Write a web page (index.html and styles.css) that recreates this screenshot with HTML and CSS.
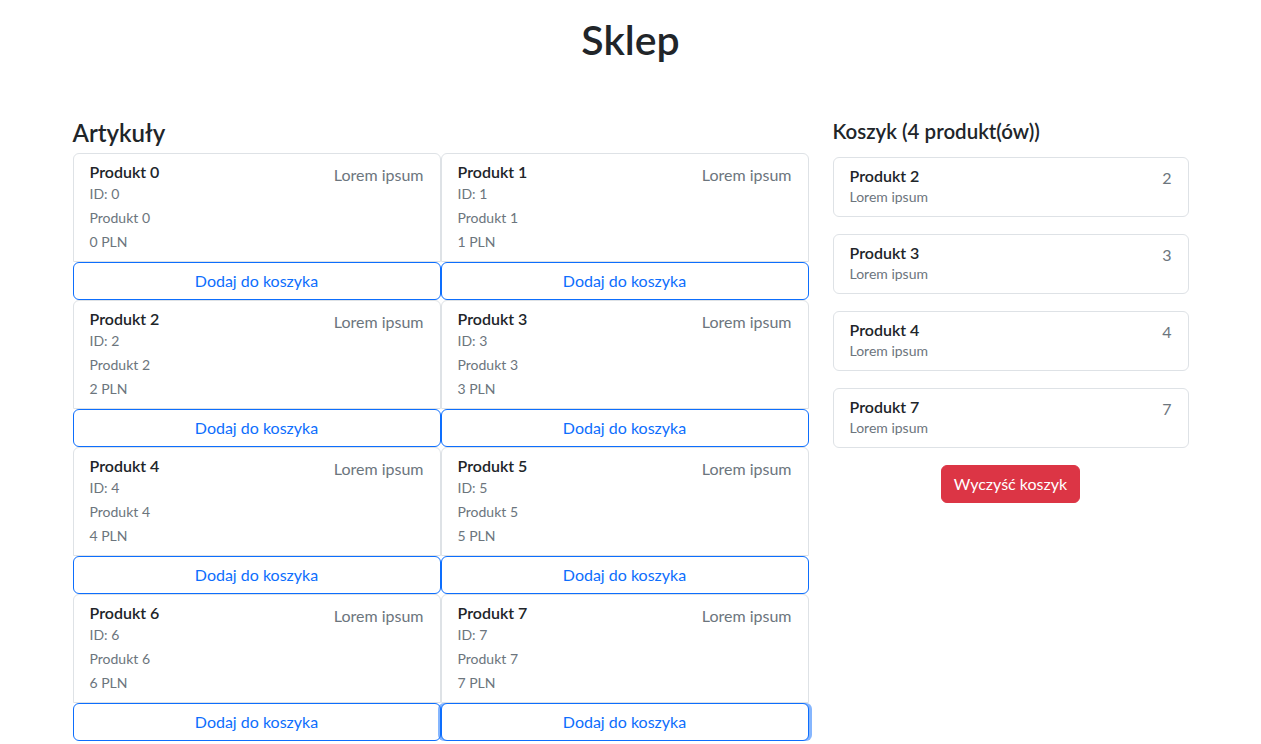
FILE: index.html
```html
<!DOCTYPE html>
<html lang="pl">
<head>
<meta charset="utf-8">
<title>Sklep</title>
<link rel="stylesheet" href="styles.css">
</head>
<body>
<div class="container">
  <h1 class="page-title">Sklep</h1>
  <div class="layout">
    <section class="products">
      <h2 class="section-title">Artykuły</h2>
      <div class="product-grid">
        <div class="product">
          <div class="card">
            <div class="card-head"><span class="card-title">Produkt 0</span><span class="card-aside">Lorem ipsum</span></div>
            <div class="card-line">ID: 0</div>
            <div class="card-line">Produkt 0</div>
            <div class="card-line">0 PLN</div>
          </div>
          <button class="btn-outline">Dodaj do koszyka</button>
        </div>
        <div class="product">
          <div class="card">
            <div class="card-head"><span class="card-title">Produkt 1</span><span class="card-aside">Lorem ipsum</span></div>
            <div class="card-line">ID: 1</div>
            <div class="card-line">Produkt 1</div>
            <div class="card-line">1 PLN</div>
          </div>
          <button class="btn-outline">Dodaj do koszyka</button>
        </div>
        <div class="product">
          <div class="card">
            <div class="card-head"><span class="card-title">Produkt 2</span><span class="card-aside">Lorem ipsum</span></div>
            <div class="card-line">ID: 2</div>
            <div class="card-line">Produkt 2</div>
            <div class="card-line">2 PLN</div>
          </div>
          <button class="btn-outline">Dodaj do koszyka</button>
        </div>
        <div class="product">
          <div class="card">
            <div class="card-head"><span class="card-title">Produkt 3</span><span class="card-aside">Lorem ipsum</span></div>
            <div class="card-line">ID: 3</div>
            <div class="card-line">Produkt 3</div>
            <div class="card-line">3 PLN</div>
          </div>
          <button class="btn-outline">Dodaj do koszyka</button>
        </div>
        <div class="product">
          <div class="card">
            <div class="card-head"><span class="card-title">Produkt 4</span><span class="card-aside">Lorem ipsum</span></div>
            <div class="card-line">ID: 4</div>
            <div class="card-line">Produkt 4</div>
            <div class="card-line">4 PLN</div>
          </div>
          <button class="btn-outline">Dodaj do koszyka</button>
        </div>
        <div class="product">
          <div class="card">
            <div class="card-head"><span class="card-title">Produkt 5</span><span class="card-aside">Lorem ipsum</span></div>
            <div class="card-line">ID: 5</div>
            <div class="card-line">Produkt 5</div>
            <div class="card-line">5 PLN</div>
          </div>
          <button class="btn-outline">Dodaj do koszyka</button>
        </div>
        <div class="product">
          <div class="card">
            <div class="card-head"><span class="card-title">Produkt 6</span><span class="card-aside">Lorem ipsum</span></div>
            <div class="card-line">ID: 6</div>
            <div class="card-line">Produkt 6</div>
            <div class="card-line">6 PLN</div>
          </div>
          <button class="btn-outline">Dodaj do koszyka</button>
        </div>
        <div class="product">
          <div class="card">
            <div class="card-head"><span class="card-title">Produkt 7</span><span class="card-aside">Lorem ipsum</span></div>
            <div class="card-line">ID: 7</div>
            <div class="card-line">Produkt 7</div>
            <div class="card-line">7 PLN</div>
          </div>
          <button class="btn-outline is-focused">Dodaj do koszyka</button>
        </div>
      </div>
    </section>
    <aside class="cart">
      <h3 class="cart-title">Koszyk (4 produkt(ów))</h3>
      <div class="cart-item">
        <div class="cart-info"><div class="cart-name">Produkt 2</div><div class="cart-desc">Lorem ipsum</div></div>
        <div class="cart-qty">2</div>
      </div>
      <div class="cart-item">
        <div class="cart-info"><div class="cart-name">Produkt 3</div><div class="cart-desc">Lorem ipsum</div></div>
        <div class="cart-qty">3</div>
      </div>
      <div class="cart-item">
        <div class="cart-info"><div class="cart-name">Produkt 4</div><div class="cart-desc">Lorem ipsum</div></div>
        <div class="cart-qty">4</div>
      </div>
      <div class="cart-item">
        <div class="cart-info"><div class="cart-name">Produkt 7</div><div class="cart-desc">Lorem ipsum</div></div>
        <div class="cart-qty">7</div>
      </div>
      <div class="cart-actions"><button class="btn-danger">Wyczyść koszyk</button></div>
    </aside>
  </div>
</div>
</body>
</html>
```
FILE: styles.css
```css
* { box-sizing: border-box; }
body {
  margin: 0;
  font-family: Lato, "Noto Sans", sans-serif;
  font-size: 16px;
  line-height: 1.5;
  color: #212529;
  background: #fff;
}
.container {
  width: 1140px;
  margin: 0 auto;
  padding: 0 12px;
}
.page-title {
  margin: 16px 0 0;
  text-align: center;
  font-size: 41px;
  font-weight: 600;
  line-height: 48px;
}
.layout {
  display: grid;
  grid-template-columns: 736px 1fr;
  column-gap: 24px;
  margin-top: 54px;
}
.section-title {
  margin: 0 0 6px;
  font-size: 24px;
  font-weight: 600;
  line-height: 29px;
}
.product-grid {
  display: grid;
  grid-template-columns: 1fr 1fr;
}
.product {
  display: flex;
  flex-direction: column;
}
.card {
  border: 1px solid #dee2e6;
  border-radius: 6px 6px 0 0;
  padding: 8px 16px 7px;
}
.card-head {
  display: flex;
  justify-content: space-between;
  align-items: flex-start;
  height: 20px;
}
.card-title {
  font-weight: 600;
  line-height: 20px;
}
.card-aside {
  color: #6c757d;
  line-height: 26px;
}
.card-line {
  font-size: 14px;
  line-height: 24px;
  color: #6c757d;
}
.btn-outline {
  display: block;
  width: 100%;
  height: 38px;
  padding: 6px 12px;
  font-family: inherit;
  font-size: 16px;
  line-height: 24px;
  color: #0d6efd;
  background: #fff;
  border: 1px solid #0d6efd;
  border-radius: 6px;
  cursor: pointer;
}
.btn-outline.is-focused {
  box-shadow: -3px 0 0 rgba(13, 110, 253, 0.5), 3px 0 0 rgba(13, 110, 253, 0.5);
}
.cart-title {
  margin: 1px 0 14px;
  font-size: 20.5px;
  font-weight: 600;
  line-height: 24px;
}
.cart-item {
  display: flex;
  justify-content: space-between;
  align-items: flex-start;
  border: 1px solid #dee2e6;
  border-radius: 6px;
  padding: 8px 16px;
  margin-bottom: 17px;
}
.cart-name {
  font-weight: 600;
  line-height: 20px;
}
.cart-desc {
  font-size: 14px;
  line-height: 22px;
  color: #6c757d;
}
.cart-qty {
  color: #6c757d;
  line-height: 24px;
}
.cart-actions {
  display: flex;
  justify-content: center;
}
.btn-danger {
  height: 38px;
  padding: 6px 12px;
  font-family: inherit;
  font-size: 16px;
  line-height: 24px;
  color: #fff;
  background: #dc3545;
  border: 1px solid #dc3545;
  border-radius: 6px;
  cursor: pointer;
}
```
